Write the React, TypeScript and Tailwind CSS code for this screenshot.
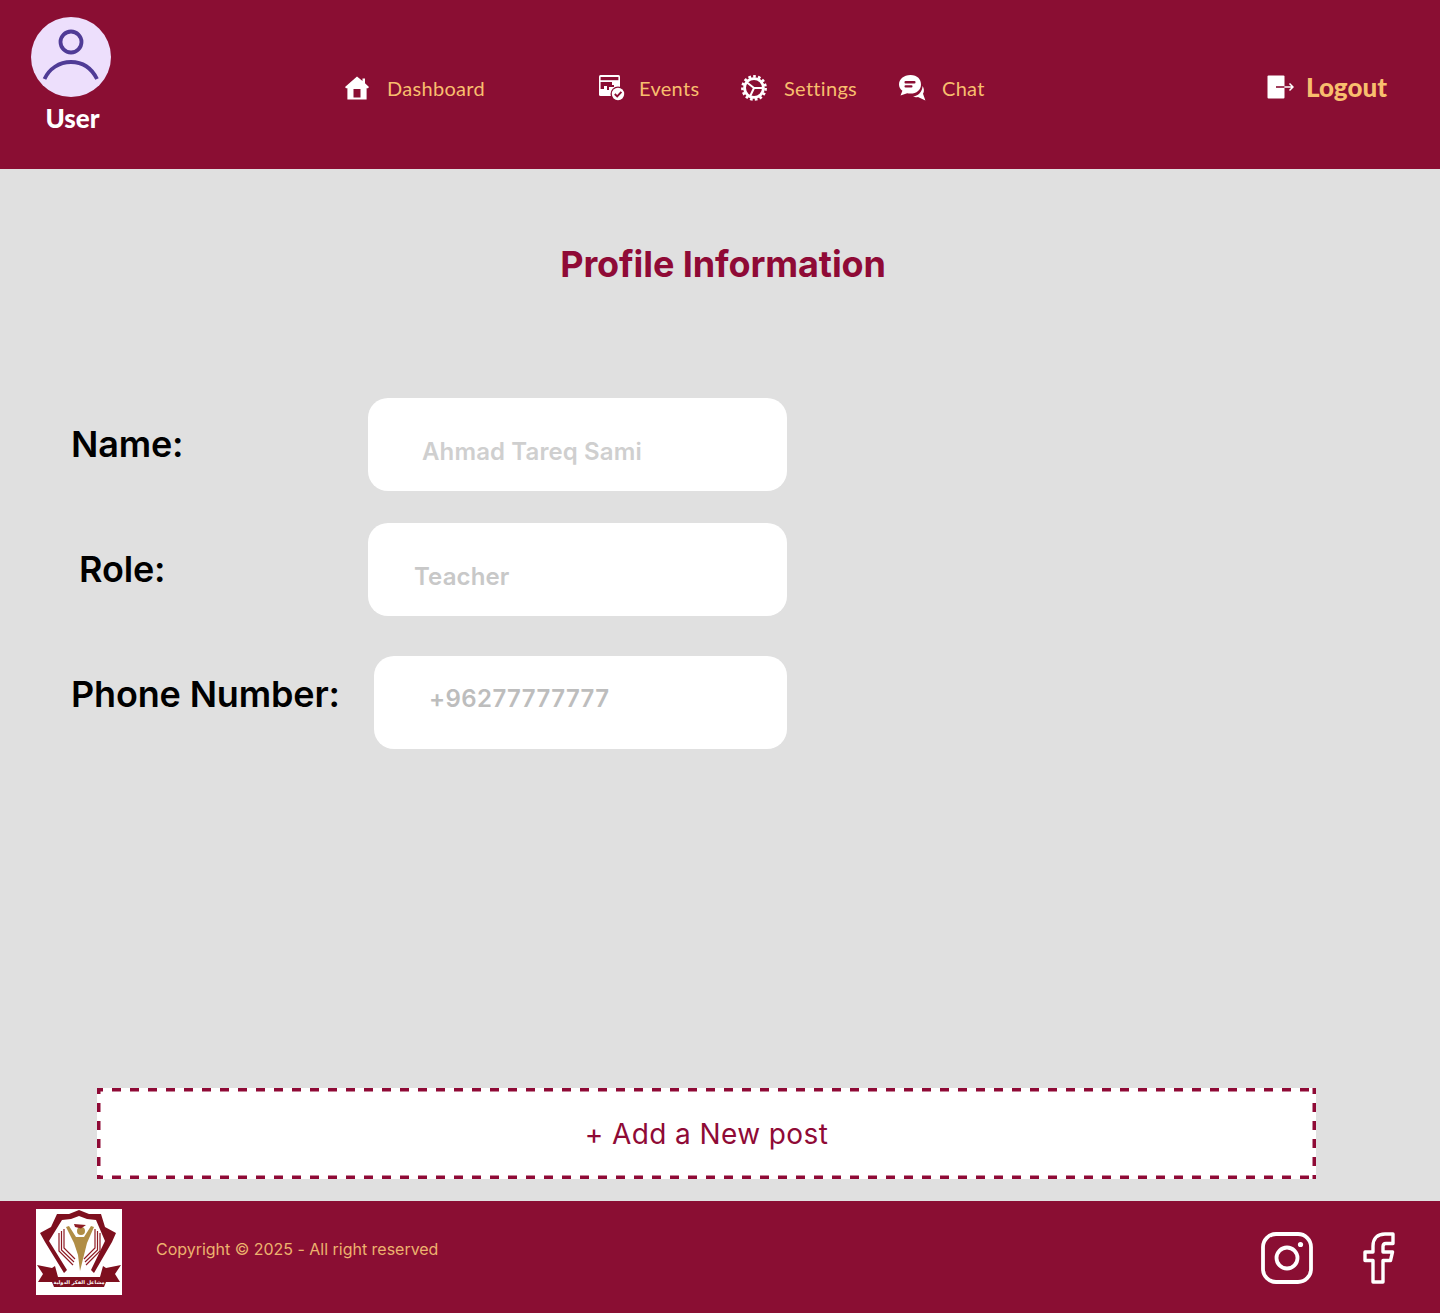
import React from 'react';

const HomeIcon = () => (
  <svg width="24" height="24" viewBox="0 0 24 24" className="block">
    <path fill="#fff" d="M12 0.5 L17.5 5 V2.5 H20 V7.2 L24 11 L23 12.3 H21.6 V23.5 H2.4 V12.3 H1 L0 11 Z" />
    <rect x="8.5" y="13" width="7" height="8.5" fill="#8A0E33" />
  </svg>
);

const EventsIcon = () => (
  <svg width="28" height="28" viewBox="0 0 28 28" className="block">
    <rect x="1" y="1" width="21" height="21" rx="1.5" fill="#fff" />
    <rect x="2.6" y="3" width="17.8" height="3.2" fill="#8A0E33" />
    <path fill="#8A0E33" d="M2.6 8 H14 V11 H16 V13 H11 V16 H9 V12 H6 V15 H2.6 Z" />
    <circle cx="20" cy="20" r="7.5" fill="#8A0E33" />
    <circle cx="20" cy="20" r="6.2" fill="#fff" />
    <path d="M16.8 20 L19.2 22.4 L23.4 17.8" fill="none" stroke="#8A0E33" strokeWidth="1.9" />
  </svg>
);

const GearIcon = () => (
  <svg width="26" height="26" viewBox="0 0 26 26" className="block">
    <circle cx="13" cy="13" r="9.4" fill="none" stroke="#fff" strokeWidth="2.8" />
    <circle cx="13" cy="13" r="11.6" fill="none" stroke="#fff" strokeWidth="2.6" strokeDasharray="2.7 2.16" />
    <path d="M13 13 L6 7.5 M13 13 L21.8 13 M13 13 L9 21.5" stroke="#fff" strokeWidth="2" fill="none" />
  </svg>
);

const ChatIcon = () => (
  <svg width="27" height="26" viewBox="0 0 27 26" className="block">
    <path fill="#fff" d="M11.5 0 C18.5 0 22 4.4 22 9.4 C22 14.8 17.6 18.6 11.5 18.6 C10.2 18.6 9.2 18.5 8.2 18.2 L1.5 20.6 L3.4 15.8 C1.2 14 0 11.8 0 9.4 C0 4.4 4.6 0 11.5 0 Z" />
    <rect x="5.5" y="6" width="11" height="2.4" rx="1" fill="#8A0E33" />
    <rect x="5.5" y="10.2" width="8" height="2.4" rx="1" fill="#8A0E33" />
    <path fill="#fff" d="M23.6 11 C25.2 13.5 25.4 16.5 24 18.8 L26.4 25.6 L19 22 C17.4 22.5 15.6 22.4 14 21.6 C18.8 21.2 23.2 17 23.6 11 Z" />
  </svg>
);

const LogoutIcon = () => (
  <svg width="27" height="24" viewBox="0 0 27 24" className="block">
    <rect x="0.5" y="0.5" width="17" height="23" rx="1" fill="#fff" />
    <path d="M9 12 H17.5" stroke="#8A0E33" strokeWidth="1.6" />
    <path d="M17.5 12 H26 M22.5 8.5 L26 12 L22.5 15.5" stroke="#fff" strokeWidth="1.5" fill="none" />
  </svg>
);

const InstagramIcon = () => (
  <svg width="52" height="52" viewBox="0 0 52 52" className="block">
    <rect x="2" y="2" width="48" height="48" rx="13" fill="none" stroke="#fff" strokeWidth="3.8" />
    <circle cx="26" cy="26" r="10.5" fill="none" stroke="#fff" strokeWidth="3.8" />
    <circle cx="39.5" cy="12.5" r="2.6" fill="#fff" />
  </svg>
);

const FacebookIcon = () => (
  <svg width="32" height="52" viewBox="0 0 32 52" className="block">
    <path
      d="M30 2 H22 C14.5 2 10 6.5 10 14 V20 H2 V28.5 H10 V50 H20 V28.5 H27.5 L29.5 20 H20 V14.5 C20 12.5 21 11.5 23 11.5 H30 Z"
      fill="none"
      stroke="#fff"
      strokeWidth="3.4"
      strokeLinejoin="round"
    />
  </svg>
);

const SchoolLogo = () => (
  <svg width="86" height="86" viewBox="0 0 86 86" className="block bg-white">
    {/* shield */}
    <path fill="#7E0F1E" d="M43 1 L53 5 L65 5 L69 18 L80 24 L76 33 L58 64 L55 61 L69 32 L60 11 L51 10 L43 7 L35 10 L26 11 L13 32 L31 61 L28 64 L9 33 L4 24 L15 18 L21 5 L33 5 Z" />
    {/* book pages */}
    <g fill="none" stroke="#8E1B24" strokeWidth="1.2">
      <path d="M23 24 V42 L37 56" />
      <path d="M25.5 22 V41 L38 53" />
      <path d="M28 20 V39 L39 50" />
      <path d="M64 24 V42 L50 56" />
      <path d="M61.5 22 V41 L49 53" />
      <path d="M59 20 V39 L48 50" />
    </g>
    {/* graduate */}
    <path fill="#B08D45" d="M30 18 L33 17 L40 28 L48 28 L55 17 L58 18 L51 34 L48 46 L44 62 L42 46 L38 34 Z" />
    <circle cx="45" cy="22" r="4" fill="#B08D45" />
    <path fill="#8E1B24" d="M38 15 L50 16 L45 19.5 L39 18 Z" />
    {/* ribbon */}
    <path fill="#7E0F1E" d="M1 56 L16 59 L19 57 L22 68 L64 68 L67 57 L70 59 L85 56 L79 65 L84 73 L70 73 L68 78 L18 78 L16 73 L2 73 L7 65 Z" />
    <text x="43" y="75" textAnchor="middle" fontSize="5" fontWeight="700" fill="#fff" fontFamily="'DejaVu Sans', sans-serif">مشاعل الفكر الدولية</text>
  </svg>
);

const navText = "text-[#F8BE6E] text-[20px] leading-none tracking-[0.3px] font-['Lato',sans-serif]";

const labelClass = "text-black text-[36px] leading-[44px] font-semibold tracking-[-0.15px]";

export default function App() {
  return (
    <div className="w-[1440px] h-[1313px] flex flex-col bg-[#E0E0E0] font-['Inter',sans-serif]">
      {/* Header */}
      <header className="h-[169px] bg-[#8A0E33] flex shrink-0">
        <div className="w-[345px] pl-[31px] pt-[17px]">
          <div className="w-[80px] h-[80px] rounded-full bg-[#EDDFFC] flex items-center justify-center">
            <svg width="60" height="56" viewBox="0 0 60 56" fill="none" stroke="#4F3B96" strokeWidth="3.8">
              <circle cx="30" cy="13" r="10.5" />
              <path d="M3.5 50 C8 40 18 33 30 33 C42 33 51 40 56 50" />
            </svg>
          </div>
          <div className="w-[83px] mt-[8px] text-center text-white text-[26px] leading-[26px] font-black font-['Lato',sans-serif]">User</div>
        </div>
        <nav className="flex items-start pt-[75px]">
          <a className="w-[253px] flex items-center gap-[18px] h-[26px]">
            <HomeIcon />
            <span className={navText}>Dashboard</span>
          </a>
          <a className="w-[143px] flex items-center gap-[13px] h-[26px]">
            <EventsIcon />
            <span className={navText}>Events</span>
          </a>
          <a className="w-[158px] flex items-center gap-[17px] h-[26px]">
            <GearIcon />
            <span className={navText}>Settings</span>
          </a>
          <a className="flex items-center gap-[16px] h-[26px]">
            <ChatIcon />
            <span className={navText}>Chat</span>
          </a>
        </nav>
        <a className="ml-auto mr-[53px] mt-[74px] flex items-center gap-[12px] h-[26px]">
          <LogoutIcon />
          <span className="text-[#F8BE6E] text-[26px] leading-none font-black font-['Lato',sans-serif]">Logout</span>
        </a>
      </header>

      {/* Main */}
      <main className="flex-1 flex flex-col relative">
        <h1 className="mt-[73px] ml-[6px] text-center text-[#8F0A36] text-[36px] leading-[44px] font-bold tracking-[-0.1px]">Profile Information</h1>

        <div className="mt-[112px] pl-[71px] flex flex-col">
          <div className="flex items-start h-[93px]">
            <span className={`${labelClass} w-[297px] pt-[24px]`}>Name:</span>
            <div className="w-[419px] h-[93px] rounded-[20px] bg-white pl-[54px] pt-[38px] text-[24px] leading-[32px] font-semibold tracking-[0.12px] text-[#CFCFCF]">Ahmad Tareq Sami</div>
          </div>
          <div className="flex items-start h-[93px] mt-[32px]">
            <span className={`${labelClass} w-[297px] pl-[8px] pt-[24px]`}>Role:</span>
            <div className="w-[419px] h-[93px] rounded-[20px] bg-white pl-[46px] pt-[38px] text-[24px] leading-[32px] font-semibold tracking-[0.12px] text-[#C8C8C8]">Teacher</div>
          </div>
          <div className="flex items-start mt-[40px]">
            <span className={`${labelClass} w-[303px] pt-[16px]`}>Phone Number:</span>
            <div className="w-[413px] h-[93px] rounded-[20px] bg-white pl-[55px] pt-[27px] text-[24px] leading-[32px] font-semibold tracking-[0.4px] text-[#BDBDBD]">+96277777777</div>
          </div>
        </div>

        <button className="relative mt-auto mb-[22px] ml-[97px] w-[1219px] h-[91px] bg-white text-[#8F0A36] text-[28px] leading-[36px] tracking-[0.4px] text-center">
          + Add a New post
          <svg width="1219" height="91" className="absolute left-0 top-0" stroke="#8F0A36" strokeWidth="3.5" strokeDasharray="9 9" strokeDashoffset="3">
            <line x1="0" y1="1.75" x2="1219" y2="1.75" />
            <line x1="0" y1="89.25" x2="1219" y2="89.25" />
            <line x1="1.75" y1="0" x2="1.75" y2="91" />
            <line x1="1217.25" y1="0" x2="1217.25" y2="91" />
          </svg>
        </button>
      </main>

      {/* Footer */}
      <footer className="h-[112px] bg-[#8A0E33] shrink-0 flex items-start">
        <div className="ml-[36px] mt-[8px]">
          <SchoolLogo />
        </div>
        <span className="ml-[34px] mt-[38px] text-[16px] leading-[20px] tracking-[-0.02px] text-[#EDB26E]">Copyright © 2025 - All right reserved</span>
        <div className="ml-auto mr-[45px] mt-[31px] flex gap-[50px]">
          <InstagramIcon />
          <FacebookIcon />
        </div>
      </footer>
    </div>
  );
}
